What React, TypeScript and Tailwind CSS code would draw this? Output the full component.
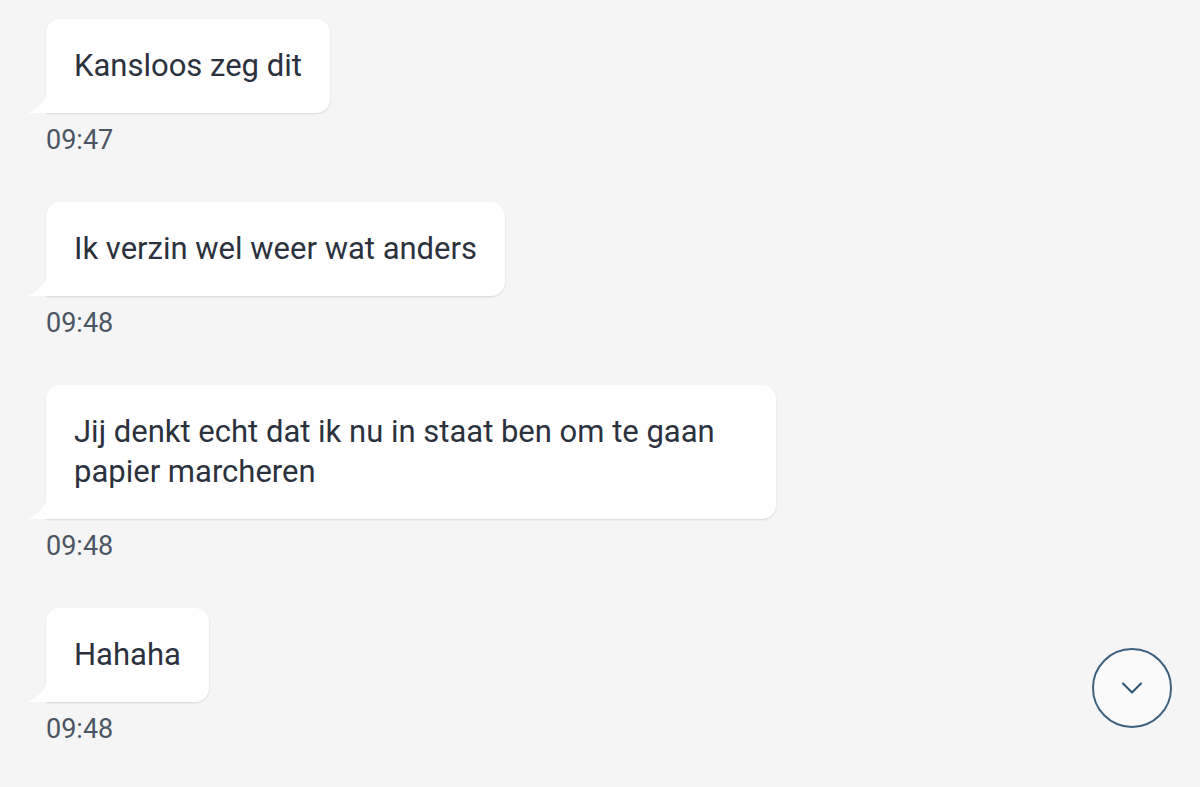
import React from "react";
import { ChevronDown } from "lucide-react";

type Message = { text: string; time: string };

const messages: Message[] = [
  { text: "Kansloos zeg dit", time: "09:47" },
  { text: "Ik verzin wel weer wat anders", time: "09:48" },
  {
    text: "Jij denkt echt dat ik nu in staat ben om te gaan papier marcheren",
    time: "09:48",
  },
  { text: "Hahaha", time: "09:48" },
];

export default function App() {
  return (
    <div
      className="relative w-[1200px] h-[787px] overflow-hidden bg-[#f5f5f5]"
      style={{ fontFamily: "Roboto, 'Noto Sans', sans-serif" }}
    >
      <div className="flex flex-col items-start gap-[47px] pt-[19px] pl-[46px]">
        {messages.map((m, i) => (
          <MessageRow key={i} message={m} />
        ))}
      </div>

      {/* scroll to bottom */}
      <button className="absolute right-[28px] bottom-[59px] w-[80px] h-[80px] rounded-full border-2 border-[#3d6280] bg-[#fafafa] flex items-center justify-center text-[#2f5573]">
        <ChevronDown size={36} strokeWidth={1.4} />
      </button>
    </div>
  );
}

function MessageRow({ message }: { message: Message }) {
  return (
    <div className="flex flex-col items-start">
      <div className="relative">
        {/* tail */}
        <svg
          className="absolute left-[-18px] bottom-0"
          width="20"
          height="17"
          viewBox="0 0 20 17"
        >
          <path d="M18 0 Q14 10 0 17 L20 17 Z" fill="#ffffff" />
        </svg>
        <div className="max-w-[730px] rounded-[14px] rounded-bl-none bg-white px-[28px] py-[27px] text-[31px] leading-[40px] text-[#2b323d] shadow-[0_1px_2px_rgba(0,0,0,0.12)]">
          {message.text}
        </div>
      </div>
      <div className="mt-[12px] text-[27px] leading-[30px] text-[#4b5664]">
        {message.time}
      </div>
    </div>
  );
}
